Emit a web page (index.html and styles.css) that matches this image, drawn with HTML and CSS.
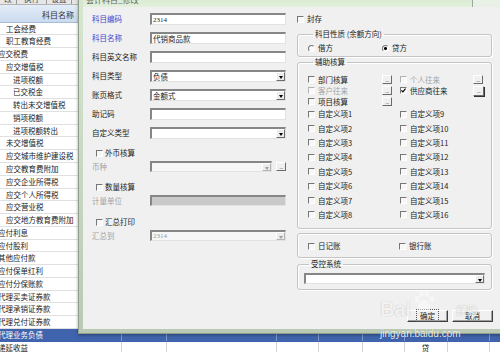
FILE: index.html
```html
<!DOCTYPE html>
<html lang="zh-CN">
<head>
    <meta charset="UTF-8">
    <meta name="viewport" content="width=device-width, initial-scale=1.0">
    <title>会计科目_修改</title>
    <link rel="stylesheet" href="styles.css">
</head>
<body>
<div class="screen">

    <!-- 背后的科目表 -->
    <div class="sheet">
        <div class="toolbar">
            <span class="tb tb-first">改</span>
            <span class="tb">执行</span>
            <span class="tb">设置</span>
        </div>
        <div class="sheet-head"><span class="hcell">科目名称</span></div>
        <div class="rows">
            <div class="row"><span class="name l1">工会经费</span></div>
            <div class="row"><span class="name l1">职工教育经费</span></div>
            <div class="row"><span class="name l0">应交税费</span></div>
            <div class="row"><span class="name l1">应交增值税</span></div>
            <div class="row"><span class="name l2">进项税额</span></div>
            <div class="row"><span class="name l2">已交税金</span></div>
            <div class="row"><span class="name l2">转出未交增值税</span></div>
            <div class="row"><span class="name l2">销项税额</span></div>
            <div class="row"><span class="name l2">进项税额转出</span></div>
            <div class="row"><span class="name l1">未交增值税</span></div>
            <div class="row"><span class="name l1">应交城市维护建设税</span></div>
            <div class="row"><span class="name l1">应交教育费附加</span></div>
            <div class="row"><span class="name l1">应交企业所得税</span></div>
            <div class="row"><span class="name l1">应交个人所得税</span></div>
            <div class="row"><span class="name l1">应交营业税</span></div>
            <div class="row"><span class="name l1">应交地方教育费附加</span></div>
            <div class="row"><span class="name l0">应付利息</span></div>
            <div class="row"><span class="name l0">应付股利</span></div>
            <div class="row"><span class="name l0">其他应付款</span></div>
            <div class="row"><span class="name l0">应付保单红利</span></div>
            <div class="row"><span class="name l0">应付分保账款</span></div>
            <div class="row"><span class="name l0">代理买卖证券款</span></div>
            <div class="row"><span class="name l0">代理承销证券款</span></div>
            <div class="row"><span class="name l0">代理兑付证券款</span></div>
            <div class="row sel"><span class="name l0">代理业务负债</span></div>
            <div class="row"><span class="name l0">递延收益</span><span class="dir">贷</span></div>
        </div>
    </div>

    <!-- 修改对话框 -->
    <div class="dialog">
        <div class="titlebar">
            <span class="title">会计科目_修改</span>
            <span class="tbtn"></span>
        </div>
        <div class="body">
            <div class="pane-left">
                <div class="fields">
                    <span class="lbl blue">科目编码</span>
                    <div class="inp num">2314</div>
                    <span class="lbl blue">科目名称</span>
                    <div class="inp">代销商品款</div>
                    <span class="lbl">科目英文名称</span>
                    <div class="inp"></div>
                    <span class="lbl">科目类型</span>
                    <div class="inp">负债<span class="arrow"></span></div>
                    <span class="lbl">账页格式</span>
                    <div class="inp">金额式<span class="arrow"></span></div>
                    <span class="lbl">助记码</span>
                    <div class="inp"></div>
                    <span class="lbl">自定义类型</span>
                    <div class="inp"><span class="arrow"></span></div>
                </div>

                <div class="opt">
                    <div class="chk-row"><span class="cb"></span>外币核算</div>
                    <div class="sub">
                        <span class="lbl dim">币种</span>
                        <div class="combo">
                            <div class="inp off"><span class="arrow dim"></span></div>
                            <span class="dots">...</span>
                        </div>
                    </div>
                </div>
                <div class="opt opt-qty">
                    <div class="chk-row"><span class="cb"></span>数量核算</div>
                    <div class="sub">
                        <span class="lbl dim">计量单位</span>
                        <div class="inp grey"></div>
                    </div>
                </div>
                <div class="opt opt-sum">
                    <div class="chk-row"><span class="cb"></span>汇总打印</div>
                    <div class="sub">
                        <span class="lbl dim">汇总到</span>
                        <div class="inp off num dimtxt">2314<span class="arrow dim"></span></div>
                    </div>
                </div>
            </div>

            <div class="pane-right">
                <div class="chk-line seal"><span class="cb"></span>封存</div>

                <fieldset class="grp g1">
                    <legend>科目性质 (余额方向)</legend>
                    <div class="radios">
                        <div class="chk-line"><span class="rb"></span>借方</div>
                        <div class="chk-line"><span class="rb on"></span>贷方</div>
                    </div>
                </fieldset>

                <fieldset class="grp g2">
                    <legend>辅助核算</legend>
                    <div class="aux">
                        <div class="chk-line c1"><span class="cb"></span>部门核算</div>
                        <span class="dots c2">...</span>
                        <div class="chk-line c4 off"><span class="cb"></span>个人往来</div>
                        <span class="dots c5">...</span>

                        <div class="chk-line c1 off"><span class="cb"></span>客户往来</div>
                        <span class="dots c2">...</span>
                        <div class="chk-line c4">
                            <span class="cb"><svg width="5" height="5" viewBox="0 0 5 5"><path d="M0.4 2.3 L1.9 3.9 L4.6 0.6" fill="none" stroke="#000" stroke-width="1.2"/></svg></span>供应商往来
                        </div>
                        <span class="dots c5 def">...</span>

                        <div class="chk-line c1"><span class="cb"></span>项目核算</div>
                        <span class="dots c2">...</span>

                        <div class="chk-line c1"><span class="cb"></span>自定义项1</div>
                        <div class="chk-line c4"><span class="cb"></span>自定义项9</div>
                        <div class="chk-line c1"><span class="cb"></span>自定义项2</div>
                        <div class="chk-line c4"><span class="cb"></span>自定义项10</div>
                        <div class="chk-line c1"><span class="cb"></span>自定义项3</div>
                        <div class="chk-line c4"><span class="cb"></span>自定义项11</div>
                        <div class="chk-line c1"><span class="cb"></span>自定义项4</div>
                        <div class="chk-line c4"><span class="cb"></span>自定义项12</div>
                        <div class="chk-line c1"><span class="cb"></span>自定义项5</div>
                        <div class="chk-line c4"><span class="cb"></span>自定义项13</div>
                        <div class="chk-line c1"><span class="cb"></span>自定义项6</div>
                        <div class="chk-line c4"><span class="cb"></span>自定义项14</div>
                        <div class="chk-line c1"><span class="cb"></span>自定义项7</div>
                        <div class="chk-line c4"><span class="cb"></span>自定义项15</div>
                        <div class="chk-line c1"><span class="cb"></span>自定义项8</div>
                        <div class="chk-line c4"><span class="cb"></span>自定义项16</div>
                    </div>
                </fieldset>

                <fieldset class="grp g3">
                    <div class="books">
                        <div class="chk-line"><span class="cb"></span>日记账</div>
                        <div class="chk-line"><span class="cb"></span>银行账</div>
                    </div>
                </fieldset>

                <fieldset class="grp g4">
                    <legend>受控系统</legend>
                    <div class="inp wide"><span class="arrow"></span></div>
                </fieldset>

                <div class="actions">
                    <button class="btn ok"><span>确定</span></button>
                    <button class="btn">取消</button>
                </div>
            </div>
        </div>
    </div>

    <!-- 水印 -->
    <div class="wm">
        <div class="wm-logo">
            <span class="wm-bai">Bai</span>
            <svg class="paw" width="22" height="24" viewBox="0 0 22 24">
                <ellipse cx="4" cy="9" rx="2.4" ry="3" fill="#fff"/>
                <ellipse cx="8.5" cy="3.8" rx="2.4" ry="3.2" fill="#fff"/>
                <ellipse cx="14" cy="3.8" rx="2.4" ry="3.2" fill="#fff"/>
                <ellipse cx="18.5" cy="9" rx="2.4" ry="3" fill="#fff"/>
                <path d="M11 10 C6.5 10 4 15.5 5.5 19.5 C7 23 15 23 16.5 19.5 C18 15.5 15.5 10 11 10 Z" fill="#fff"/>
            </svg>
            <span class="wm-jy">经验</span>
        </div>
        <div class="wm-url">jingyan.baidu.com</div>
    </div>
</div>
</body>
</html>
```

FILE: styles.css
```css
* {
    box-sizing: border-box;
}
body {
    margin: 0;
    font-family: "Noto Sans CJK SC", "Liberation Sans", sans-serif;
    font-size: 7.5px;
    line-height: 10px;
    color: #222;
    background: #fff;
}
.screen {
    position: relative;
    width: 500px;
    height: 352px;
    overflow: hidden;
}

/* ---------- 科目表 ---------- */
.toolbar {
    display: flex;
    align-items: flex-end;
    height: 5px;
    overflow: hidden;
    background: #e6e6e6;
    border-bottom: 1px solid #b4b4b4;
}
.tb {
    width: 30px;
    line-height: 10px;
    text-align: center;
    color: #444;
    border-right: 1px solid #999;
}
.tb-first {
    width: 17px;
}
.tb:last-child {
    width: 25px;
}
.sheet-head {
    height: 17.6px;
    background: linear-gradient(#e4edf8, #cadaee);
    border-bottom: 1px solid #a7bcd8;
}
.hcell {
    display: block;
    width: 79px;
    padding-right: 5px;
    text-align: right;
    font-size: 8px;
    line-height: 19px;
    color: #333;
}
.rows {
    background-image:
        linear-gradient(#d4d4d4, #d4d4d4), linear-gradient(#d4d4d4, #d4d4d4),
        linear-gradient(#d4d4d4, #d4d4d4), linear-gradient(#d4d4d4, #d4d4d4),
        linear-gradient(#d4d4d4, #d4d4d4), linear-gradient(#d4d4d4, #d4d4d4),
        linear-gradient(#d4d4d4, #d4d4d4), linear-gradient(#d4d4d4, #d4d4d4);
    background-size: 1px 100%;
    background-repeat: no-repeat;
    background-position: 121px 0, 166px 0, 276px 0, 318px 0, 362px 0, 404px 0, 447px 0, 489px 0;
}
.row {
    display: grid;
    grid-template-columns: 121px 45px 110px 42px 44px 42px 43px 42px 1fr;
    height: 12.78px;
    line-height: 12px;
    border-bottom: 1px solid #e0e0e0;
    white-space: nowrap;
}
.row.sel {
    color: #fff;
    background-color: #3f63ad;
    background-image:
        linear-gradient(#7f98cc, #7f98cc), linear-gradient(#7f98cc, #7f98cc),
        linear-gradient(#7f98cc, #7f98cc), linear-gradient(#7f98cc, #7f98cc),
        linear-gradient(#7f98cc, #7f98cc), linear-gradient(#7f98cc, #7f98cc),
        linear-gradient(#7f98cc, #7f98cc), linear-gradient(#7f98cc, #7f98cc);
    background-size: 1px 100%;
    background-repeat: no-repeat;
    background-position: 121px 0, 166px 0, 276px 0, 318px 0, 362px 0, 404px 0, 447px 0, 489px 0;
    border-bottom-color: #3f63ad;
}
.name {
    grid-column: 1;
}
.l0 { margin-left: -2px; }
.l1 { padding-left: 6px; }
.l2 { padding-left: 13px; }
.dir {
    grid-column: 7;
    text-align: center;
}

/* ---------- 对话框 ---------- */
.dialog {
    position: absolute;
    left: 78px;
    top: -15px;
    width: 440px;
    height: 349px;
    display: flex;
    flex-direction: column;
    padding: 0 4px 4px;
    background: linear-gradient(#d7e7d0, #b9c9b4);
    border: 1px solid #8e9e8b;
    box-shadow: 0 1px 3px rgba(0, 0, 0, 0.35);
}
.titlebar {
    flex: none;
    display: flex;
    height: 21px;
    padding: 8px 0 0 3px;
    background: linear-gradient(#cde3c2, #e3f0dc);
}
.title {
    line-height: 12px;
    font-size: 8px;
    color: #666;
}
.tbtn {
    width: 30px;
    height: 25px;
    margin: -8px 11px 0 auto;
    border: 1px solid #9aa89a;
    border-radius: 3px;
    background: #e9f1e6;
}
.body {
    flex: 1;
    display: flex;
    background: #f0f0f0;
}

.pane-left {
    width: 207px;
    padding: 6px 0 0 9px;
}
.fields {
    display: grid;
    grid-template-columns: 58px 136px;
    grid-auto-rows: 12px;
    row-gap: 7px;
    align-items: center;
}
.lbl {
    white-space: nowrap;
}
.blue {
    color: #4646cc;
}
.dim,
.off {
    color: #a3a3a3;
}
.inp {
    position: relative;
    display: flex;
    align-items: center;
    height: 12px;
    padding-left: 1px;
    background: #fff;
    border-style: solid;
    border-width: 2px 1px 1px 2px;
    border-color: #868686 #e2e2e2 #e2e2e2 #868686;
    white-space: nowrap;
}
.num {
    font-family: "Liberation Serif", serif;
    font-size: 7px;
}
.dimtxt {
    color: #9a9a9a;
}
.inp.off {
    background: #f6f6f6;
}
.inp.grey {
    background: #c9c9c9;
}
.arrow {
    position: absolute;
    top: 0;
    right: 0;
    bottom: 0;
    width: 9px;
    background: #ececec;
    border: 1px solid;
    border-color: #fff #6c6c6c #6c6c6c #fff;
}
.arrow::after {
    content: "";
    position: absolute;
    left: 2px;
    top: 3px;
    border-left: 2.5px solid transparent;
    border-right: 2.5px solid transparent;
    border-top: 3px solid #000;
}
.arrow.dim::after {
    border-top-color: #a0a0a0;
}
.arrow.dim {
    border-color: #fff #b4b4b4 #b4b4b4 #fff;
}

.opt {
    margin-top: 9px;
}
.opt-qty {
    margin-top: 10px;
}
.opt-sum {
    margin-top: 11px;
}
.chk-row {
    display: flex;
    align-items: center;
    gap: 2px;
    height: 10px;
    padding-left: 4px;
}
.sub {
    display: grid;
    grid-template-columns: 58px 136px;
    align-items: center;
    height: 11px;
    margin-top: 3px;
}
.sub .inp {
    height: 11px;
}
.combo {
    display: flex;
    align-items: center;
    gap: 4px;
}
.combo .inp {
    flex: 1;
}

/* 复选框、单选框、小按钮 */
.cb {
    flex: none;
    display: inline-flex;
    align-items: center;
    justify-content: center;
    width: 7px;
    height: 7px;
    background: #f7f7f7;
    border: 1px solid;
    border-color: #767676 #fff #fff #767676;
}
.off .cb {
    border-color: #b2b2b2 #fff #fff #b2b2b2;
}
.rb {
    flex: none;
    width: 7px;
    height: 7px;
    border-radius: 50%;
    background: #f7f7f7;
    border: 1px solid;
    border-color: #767676 #fff #fff #767676;
}
.rb.on {
    background: radial-gradient(circle, #000 1.2px, #f7f7f7 1.7px);
}
.dots {
    display: block;
    width: 10px;
    height: 9px;
    font-family: "Liberation Sans", sans-serif;
    font-size: 6px;
    line-height: 9px;
    letter-spacing: -0.5px;
    text-align: center;
    color: #333;
    background: #f0f0f0;
    border: 1px solid;
    border-color: #fff #6a6a6a #6a6a6a #fff;
}
.dots.def {
    width: 11px;
    height: 10px;
    box-shadow: 1px 1px 0 #333;
}

.pane-right {
    flex: 1;
    padding: 7px 0 0 7px;
}
.chk-line {
    display: flex;
    align-items: center;
    gap: 3px;
    height: 10px;
    white-space: nowrap;
}
.seal {
    margin-bottom: 5px;
}
.grp {
    width: 195px;
    margin: 0;
    padding: 4px 0 3px 10px;
    min-width: 0;
    border: 1px solid #c4c4c4;
    border-radius: 3px;
    box-shadow: inset 1px 1px 0 #fff, 1px 1px 0 #fff;
}
.grp legend {
    margin-left: 5px;
    padding: 0 2px;
    line-height: 10px;
}
.radios {
    display: grid;
    grid-template-columns: 74px 1fr;
}
.g2 {
    padding: 7px 0 6px 10px;
}
.aux {
    display: grid;
    grid-template-columns: 74px 10px 8px 73px 12px;
    grid-template-rows: repeat(3, 11px) repeat(8, 14.4px);
    align-items: center;
}
.c1 { grid-column: 1; }
.c2 { grid-column: 2; }
.c4 { grid-column: 4; }
.c5 { grid-column: 5; }
.g3 {
    margin-top: 4px;
    padding: 7px 0 6px 10px;
}
.books {
    display: grid;
    grid-template-columns: 91px 1fr;
}
.g4 {
    margin-top: 1px;
    padding: 4px 0 5px 6px;
}
.inp.wide {
    width: 181px;
    height: 11px;
}
.actions {
    display: flex;
    justify-content: flex-end;
    gap: 4px;
    width: 196px;
    margin-top: 20px;
}
.btn {
    width: 41px;
    height: 12px;
    padding: 0;
    font: inherit;
    line-height: 10px;
    color: #222;
    background: #f0f0f0;
    border: 1px solid;
    border-color: #fff #404040 #404040 #fff;
    box-shadow: inset -1px -1px 0 #a0a0a0;
}
.btn.ok span {
    padding: 0 3px;
    outline: 1px dotted #555;
}

/* ---------- 水印 ---------- */
.wm {
    position: absolute;
    left: 380px;
    top: 294px;
    pointer-events: none;
}
.wm-logo {
    display: flex;
    align-items: flex-end;
    height: 26px;
    color: rgba(255, 255, 255, 0.85);
    text-shadow: 0 0 1px rgba(0, 0, 0, 0.3);
    white-space: nowrap;
}
.wm-bai {
    font-family: "Liberation Sans", sans-serif;
    font-size: 20px;
    font-weight: bold;
    line-height: 22px;
}
.paw {
    margin: 0 0 6px 2px;
    opacity: 0.45;
}
.wm-jy {
    margin-left: 21px;
    font-size: 11px;
    font-weight: bold;
    line-height: 20px;
}
.wm-url {
    margin-top: 9px;
    font-family: "Liberation Sans", sans-serif;
    font-size: 10px;
    line-height: 10px;
    color: rgba(255, 255, 255, 0.9);
    text-shadow: 0 0 1px rgba(0, 0, 0, 0.3);
}
```
